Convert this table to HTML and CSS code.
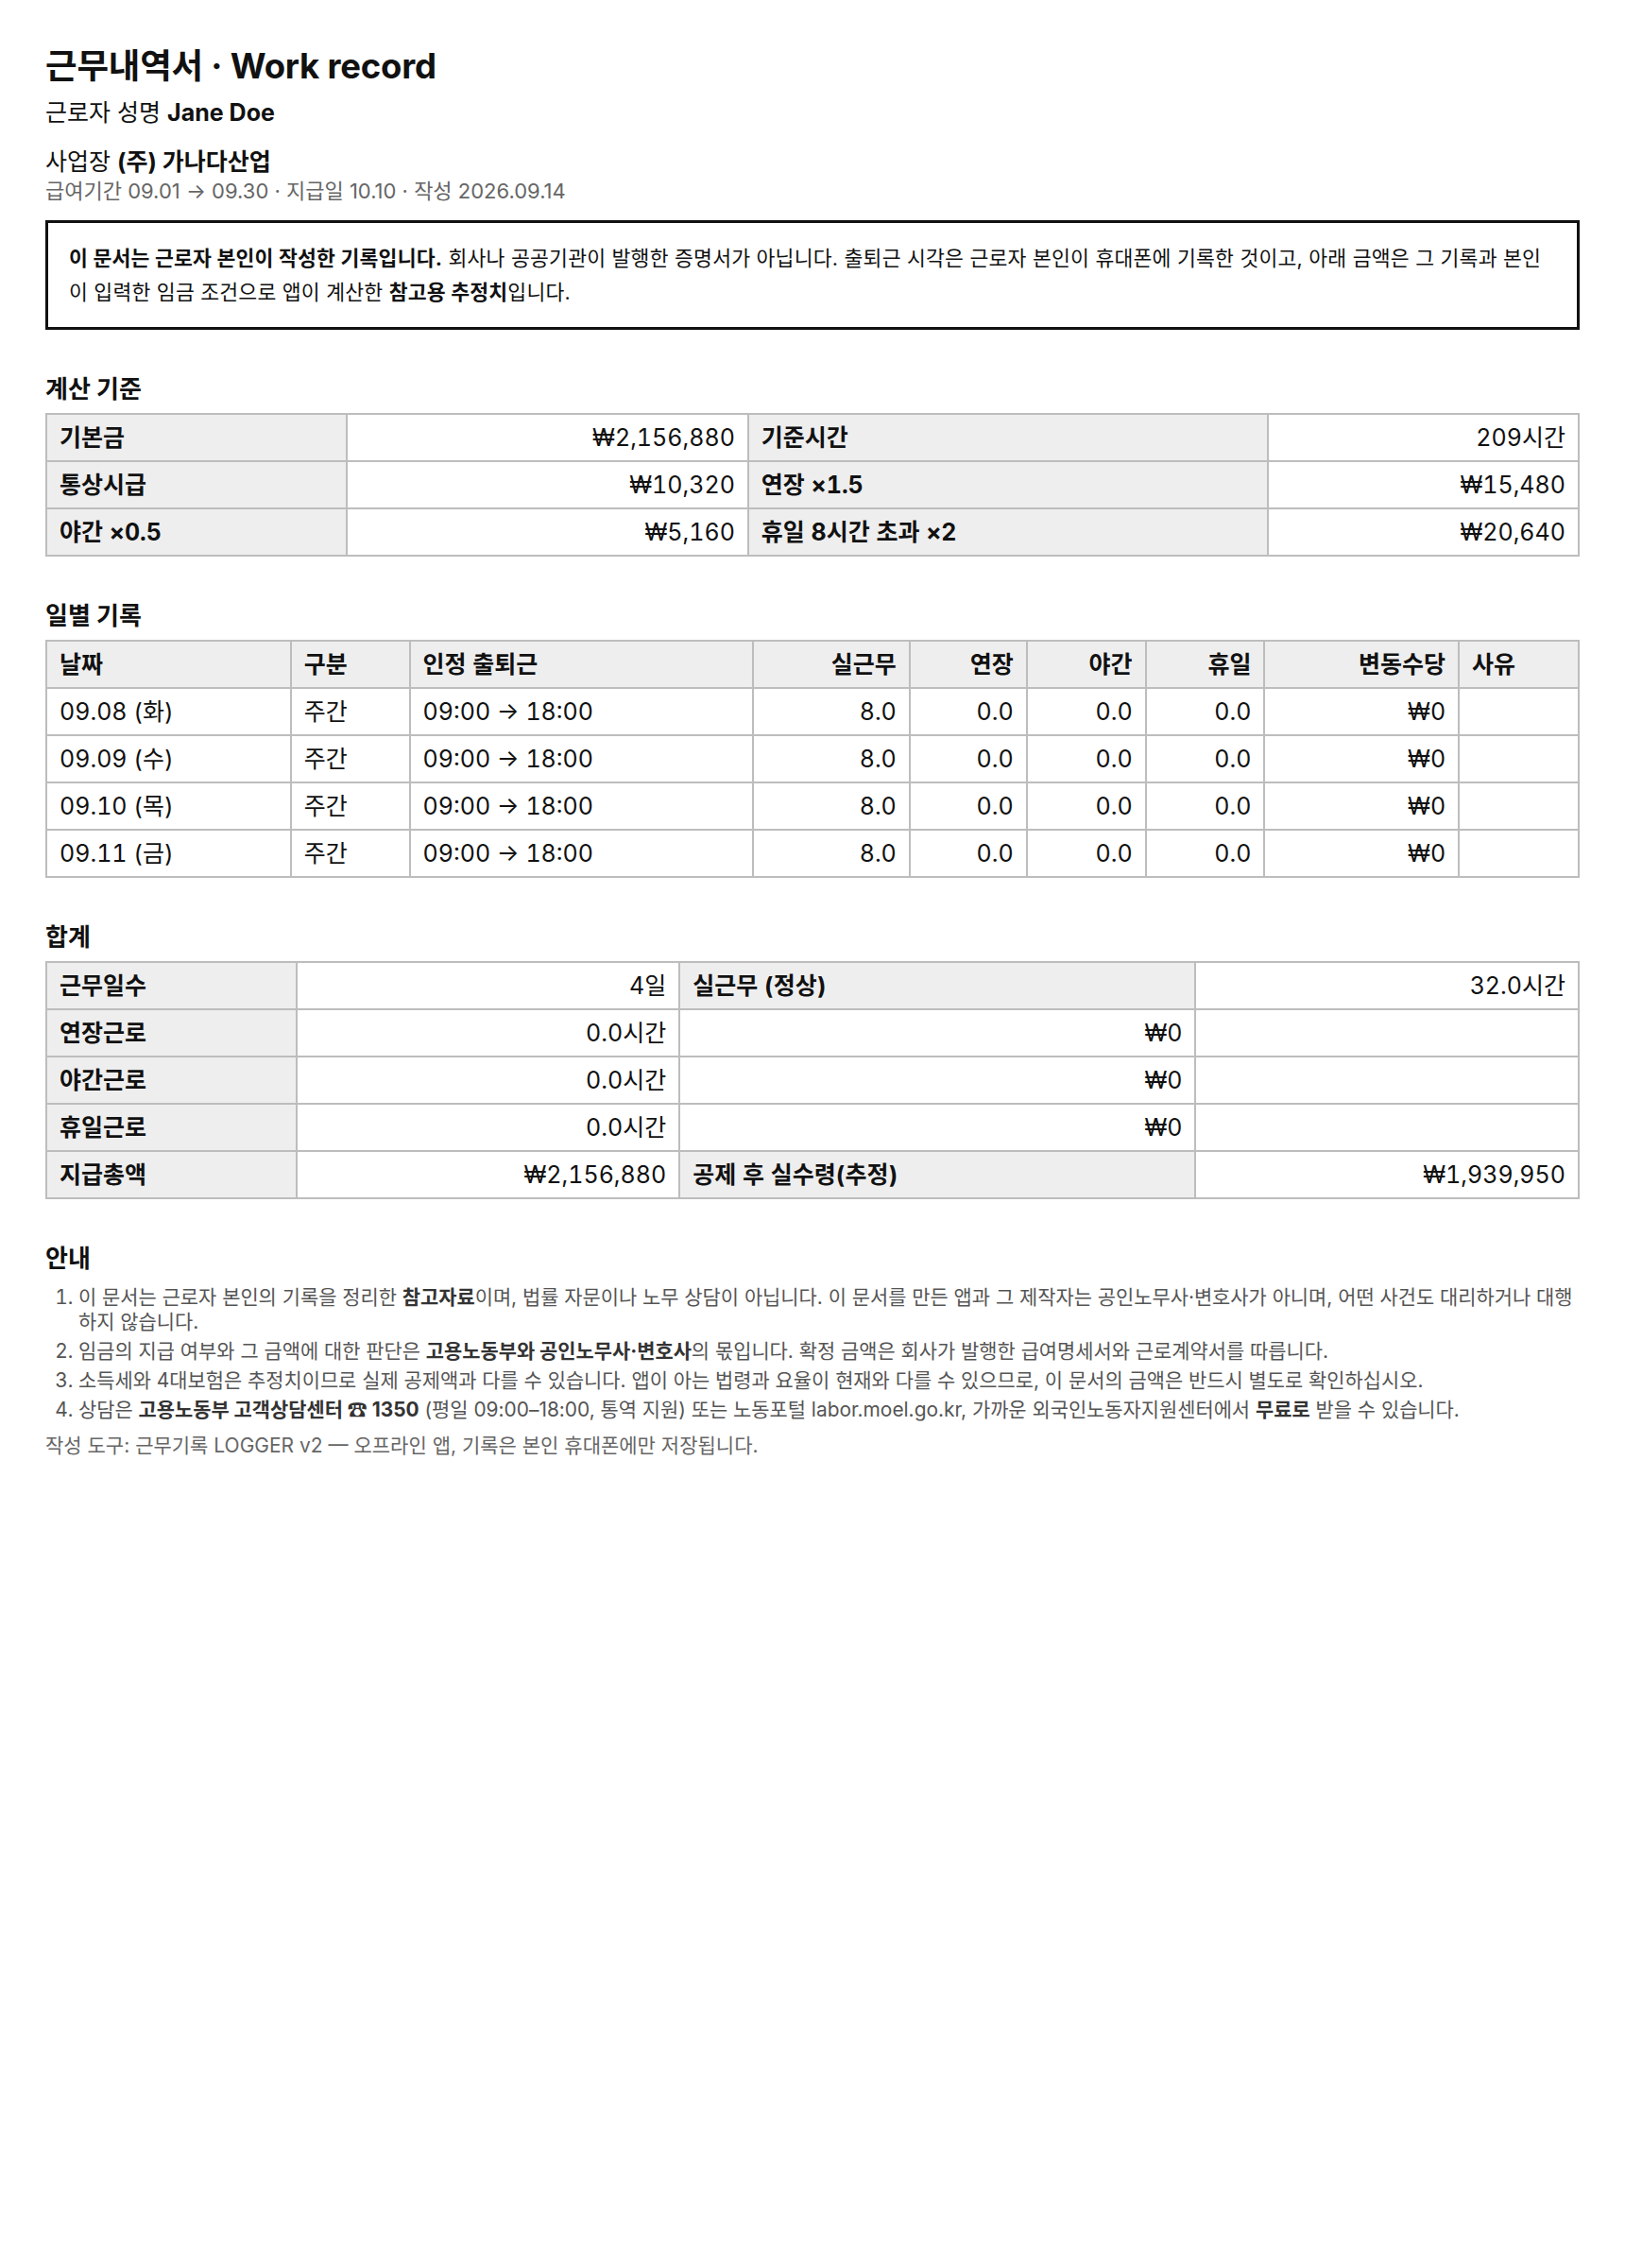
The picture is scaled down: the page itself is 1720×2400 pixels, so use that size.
FILE: index.html
```html
<!DOCTYPE html>
<html lang="ko">
<head>
<meta charset="utf-8">
<title>근무내역서 · Work record</title>
<link rel="stylesheet" href="styles.css">
</head>
<body>
<main class="doc">
  <header class="head">
    <h1 class="title">근무내역서 · Work record</h1>
    <p class="who">근로자 성명 <strong>Jane Doe</strong></p>
    <p class="biz">사업장 <strong>(주) 가나다산업</strong></p>
    <p class="meta">급여기간 09.01 → 09.30 · 지급일 10.10 · 작성 2026.09.14</p>
  </header>

  <div class="notice">
    <strong>이 문서는 근로자 본인이 작성한 기록입니다.</strong> 회사나 공공기관이 발행한 증명서가 아닙니다. 출퇴근 시각은 근로자 본인이 휴대폰에 기록한 것이고, 아래 금액은 그 기록과 본인이 입력한 임금 조건으로 앱이 계산한 <strong>참고용 추정치</strong>입니다.
  </div>

  <section class="sec">
    <h2 class="sec-title">계산 기준</h2>
    <table class="grid">
      <colgroup>
        <col class="b1"><col class="b2"><col class="b3"><col class="b4">
      </colgroup>
      <tbody>
        <tr><th>기본금</th><td class="num">₩2,156,880</td><th>기준시간</th><td class="num">209시간</td></tr>
        <tr><th>통상시급</th><td class="num">₩10,320</td><th>연장 ×1.5</th><td class="num">₩15,480</td></tr>
        <tr><th>야간 ×0.5</th><td class="num">₩5,160</td><th>휴일 8시간 초과 ×2</th><td class="num">₩20,640</td></tr>
      </tbody>
    </table>
  </section>

  <section class="sec">
    <h2 class="sec-title">일별 기록</h2>
    <table class="grid">
      <colgroup>
        <col class="d1"><col class="d2"><col class="d3"><col class="d4"><col class="d5"><col class="d6"><col class="d7"><col class="d8"><col class="d9">
      </colgroup>
      <thead>
        <tr><th>날짜</th><th>구분</th><th>인정 출퇴근</th><th class="num">실근무</th><th class="num">연장</th><th class="num">야간</th><th class="num">휴일</th><th class="num">변동수당</th><th>사유</th></tr>
      </thead>
      <tbody>
        <tr><td>09.08 (화)</td><td>주간</td><td>09:00 → 18:00</td><td class="num">8.0</td><td class="num">0.0</td><td class="num">0.0</td><td class="num">0.0</td><td class="num">₩0</td><td></td></tr>
        <tr><td>09.09 (수)</td><td>주간</td><td>09:00 → 18:00</td><td class="num">8.0</td><td class="num">0.0</td><td class="num">0.0</td><td class="num">0.0</td><td class="num">₩0</td><td></td></tr>
        <tr><td>09.10 (목)</td><td>주간</td><td>09:00 → 18:00</td><td class="num">8.0</td><td class="num">0.0</td><td class="num">0.0</td><td class="num">0.0</td><td class="num">₩0</td><td></td></tr>
        <tr><td>09.11 (금)</td><td>주간</td><td>09:00 → 18:00</td><td class="num">8.0</td><td class="num">0.0</td><td class="num">0.0</td><td class="num">0.0</td><td class="num">₩0</td><td></td></tr>
      </tbody>
    </table>
  </section>

  <section class="sec">
    <h2 class="sec-title">합계</h2>
    <table class="grid">
      <colgroup>
        <col class="s1"><col class="s2"><col class="s3"><col class="s4">
      </colgroup>
      <tbody>
        <tr><th>근무일수</th><td class="num">4일</td><th>실근무 (정상)</th><td class="num">32.0시간</td></tr>
        <tr><th>연장근로</th><td class="num">0.0시간</td><td class="num">₩0</td><td></td></tr>
        <tr><th>야간근로</th><td class="num">0.0시간</td><td class="num">₩0</td><td></td></tr>
        <tr><th>휴일근로</th><td class="num">0.0시간</td><td class="num">₩0</td><td></td></tr>
        <tr><th>지급총액</th><td class="num">₩2,156,880</td><th>공제 후 실수령(추정)</th><td class="num">₩1,939,950</td></tr>
      </tbody>
    </table>
  </section>

  <section class="sec">
    <h2 class="sec-title">안내</h2>
    <ol class="notes">
      <li>이 문서는 근로자 본인의 기록을 정리한 <strong>참고자료</strong>이며, 법률 자문이나 노무 상담이 아닙니다. 이 문서를 만든 앱과 그 제작자는 공인노무사·변호사가 아니며, 어떤 사건도 대리하거나 대행하지 않습니다.</li>
      <li>임금의 지급 여부와 그 금액에 대한 판단은 <strong>고용노동부와 공인노무사·변호사</strong>의 몫입니다. 확정 금액은 회사가 발행한 급여명세서와 근로계약서를 따릅니다.</li>
      <li>소득세와 4대보험은 추정치이므로 실제 공제액과 다를 수 있습니다. 앱이 아는 법령과 요율이 현재와 다를 수 있으므로, 이 문서의 금액은 반드시 별도로 확인하십시오.</li>
      <li>상담은 <strong>고용노동부 고객상담센터 ☎ 1350</strong> (평일 09:00–18:00, 통역 지원) 또는 노동포털 labor.moel.go.kr, 가까운 외국인노동자지원센터에서 <strong>무료로</strong> 받을 수 있습니다.</li>
    </ol>
    <p class="footer">작성 도구: 근무기록 LOGGER v2 — 오프라인 앱, 기록은 본인 휴대폰에만 저장됩니다.</p>
  </section>
</main>
</body>
</html>
```

FILE: styles.css
```css
html {
  background: #fff;
}

body {
  margin: 0;
  padding: 48px;
  font-family: Inter, "Noto Sans CJK KR", sans-serif;
  color: #111;
  background: #fff;
}

.doc {
  display: flex;
  flex-direction: column;
}

.head {
  display: flex;
  flex-direction: column;
}

.title {
  margin: 0;
  font-size: 36.5px;
  line-height: 44px;
  font-weight: 700;
  letter-spacing: -0.2px;
}

.who,
.biz {
  margin: 0;
  font-size: 25px;
  line-height: 32px;
}

.who {
  margin-top: 11px;
}

.biz {
  margin-top: 20px;
}

.who strong,
.biz strong {
  font-weight: 700;
}

.meta {
  margin: 0;
  font-size: 22px;
  line-height: 30px;
  color: #666;
}

.notice {
  margin-top: 16px;
  border: 3px solid #111;
  padding: 19px 26px 19px 22px;
  font-size: 21.6px;
  line-height: 36px;
  letter-spacing: 0.2px;
  color: #111;
}

.notice strong {
  font-weight: 700;
}

.sec {
  margin-top: 48px;
}

.sec-title {
  margin: 0 0 10px;
  font-size: 26px;
  line-height: 30px;
  font-weight: 700;
}

.grid {
  width: 100%;
  table-layout: fixed;
  border-collapse: collapse;
  font-size: 25px;
  font-variant-numeric: tabular-nums;
}

.grid th,
.grid td {
  border: 2px solid #bdbdbd;
  padding: 7px 13px;
  line-height: 34px;
  height: 34px;
  text-align: left;
  white-space: nowrap;
}

.grid th {
  background: #eee;
  font-weight: 700;
}

.grid td {
  background: #fff;
  font-weight: 400;
}

.grid .num {
  text-align: right;
}

.b1 { width: 19.6%; }
.b2 { width: 26.2%; }
.b3 { width: 33.9%; }
.b4 { width: 20.3%; }

.d1 { width: 15.95%; }
.d2 { width: 7.76%; }
.d3 { width: 22.41%; }
.d4 { width: 10.22%; }
.d5 { width: 7.64%; }
.d6 { width: 7.76%; }
.d7 { width: 7.76%; }
.d8 { width: 12.68%; }
.d9 { width: 7.82%; }

.s1 { width: 16.32%; }
.s2 { width: 25%; }
.s3 { width: 33.68%; }
.s4 { width: 25%; }

.notes {
  margin: 13px 0 0;
  padding-left: 35px;
  font-size: 20.9px;
  line-height: 26px;
  color: #555;
}

.notes li {
  margin-top: 5px;
}

.notes li:first-child {
  margin-top: 0;
}

.notes strong {
  color: #333;
  font-weight: 700;
}

.footer {
  margin: 11px 0 0;
  font-size: 21px;
  line-height: 27px;
  color: #666;
}
```
